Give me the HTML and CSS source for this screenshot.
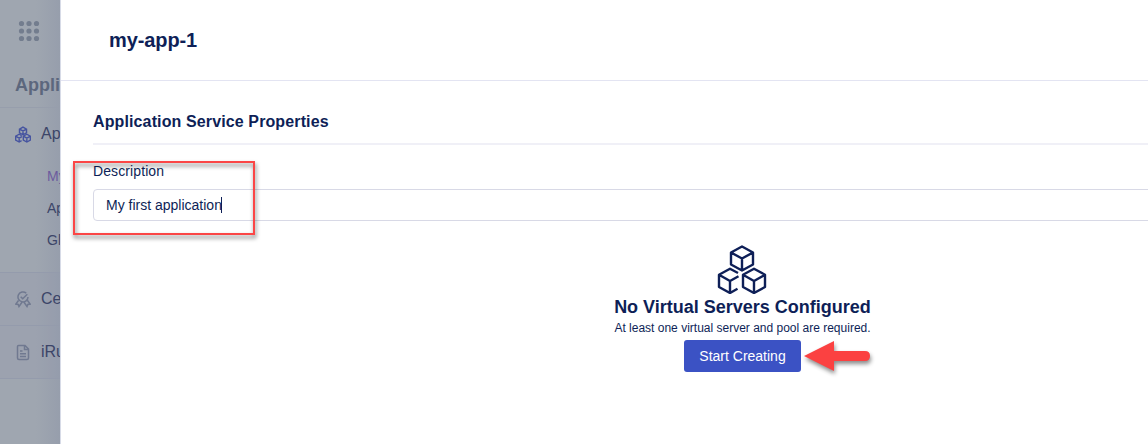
FILE: index.html
```html
<!DOCTYPE html>
<html lang="en">
<head>
<meta charset="utf-8">
<title>my-app-1</title>
<link rel="stylesheet" href="styles.css">
</head>
<body>
<svg class="defs" aria-hidden="true">
  <symbol id="cubes" viewBox="0 0 50 49">
    <path d="M25 1.500 36 7.500V19.500L25 25.500 14 19.500V7.500ZM14 7.500 25 13.500 36 7.500M25 13.500V25.500"/>
    <path d="M21 28 13 23.700 2 29.700V42L13 48 20.500 43.800M2 29.700 13 36 21.500 31.200M13 36V48"/>
    <path d="M37 23.700 48 29.700V42L37 48 26 42V29.700ZM26 29.700 37 36 48 29.700M37 36V48"/>
  </symbol>
</svg>
<div class="app">
  <nav class="sidebar">
    <div class="side-head">
      <svg class="grid-icon" viewBox="0 0 20 20"><circle cx="2.500" cy="2.500" r="2.600"/><circle cx="10" cy="2.500" r="2.600"/><circle cx="17.500" cy="2.500" r="2.600"/><circle cx="2.500" cy="10" r="2.600"/><circle cx="10" cy="10" r="2.600"/><circle cx="17.500" cy="10" r="2.600"/><circle cx="2.500" cy="17.500" r="2.600"/><circle cx="10" cy="17.500" r="2.600"/><circle cx="17.500" cy="17.500" r="2.600"/></svg>
      <h2 class="side-title">Appli</h2>
    </div>
    <section class="group">
      <div class="item"><svg class="item-icon active-icon"><use href="#cubes"/></svg><span>Ap</span></div>
      <ul class="sub">
        <li class="current">My</li>
        <li>Ap</li>
        <li>Gl</li>
      </ul>
    </section>
    <div class="item row"><svg class="item-icon" viewBox="0 0 16 16"><path d="M11.200 1.600A5 5 0 1 0 13 5.500M5.700 5.200 7.700 7.200 12.300 2.800M3.500 9 .8 12.600 3.200 12.900 4 15 6.800 11M12.500 9 15.200 12.600 12.800 12.900 12 15 9.200 11"/></svg><span>Ce</span></div>
    <div class="item row"><svg class="item-icon" viewBox="0 0 16 16"><path d="M3.500 1H10L13.500 4.500V13.500Q13.500 15 12 15H4Q2.500 15 2.500 13.500V2Q2.500 1 3.500 1M9.500 1V5H13.500M5 6.500H7.500M5 9.200H11M5 12H11"/></svg><span>iRu</span></div>
  </nav>
  <main class="panel">
    <header class="panel-head"><h1>my-app-1</h1></header>
    <div class="panel-body">
      <h2 class="section-title">Application Service Properties</h2>
      <label class="label" for="description">Description</label>
      <div class="field" id="description"><span>My first application</span><i class="caret"></i></div>
      <div class="empty">
        <svg class="empty-icon"><use href="#cubes"/></svg>
        <h3>No Virtual Servers Configured</h3>
        <p>At least one virtual server and pool are required.</p>
        <button class="start">Start Creating</button>
      </div>
    </div>
  </main>
  <div class="highlight"></div>
  <svg class="arrow" viewBox="0 0 80 44"><path d="M6 20 36 5V15H67Q72 15 72 20T67 25H36V35Z"/></svg>
</div>
</body>
</html>
```
FILE: styles.css
```css
* { box-sizing: border-box; }
body { margin: 0; overflow: hidden; font-family: "Liberation Sans", Arial, sans-serif; color: #0e1f57; }
h1, h2, h3, p, ul { margin: 0; padding: 0; }
.defs { position: absolute; width: 0; height: 0; }
.app { position: relative; display: flex; width: 1148px; height: 444px; overflow: hidden; background: #fff; }
.sidebar { flex: 0 0 60px; overflow: hidden; white-space: nowrap; color: #3c4568; background: linear-gradient(90deg, transparent 36px, rgba(125, 134, 160, .25)), #9fa6b0; }
.side-head { height: 108px; padding: 21px 0 0 15px; border-bottom: 1px solid #979eac; }
.grid-icon { display: block; width: 20px; height: 20px; margin-left: 4px; fill: #737d8e; overflow: visible; }
.side-title { margin-top: 34px; font-size: 18px; line-height: 20px; color: #5c677d; }
.group { height: 165px; border-bottom: 1px solid #949bac; }
.item { display: flex; align-items: center; gap: 10px; height: 52px; padding-left: 15px; font-size: 16px; }
.item-icon { flex: none; width: 16px; height: 17px; fill: none; stroke: #707990; stroke-width: 1.5; }
.active-icon { stroke: #4654a0; stroke-width: 4.4; }
.sub { list-style: none; font-size: 14px; line-height: 32px; padding-left: 47px; }
.sub .current { color: #6c5b9e; }
.row { height: 53px; border-bottom: 1px solid #949bac; background: rgba(145, 149, 172, .22); }
.panel { flex: none; width: 1365px; border-left: 1px solid #d7dbe7; background: #fff; }
.panel-head { height: 81px; padding: 28px 0 0 48px; border-bottom: 1px solid #e3e4f2; }
.panel-head h1 { font-size: 20px; line-height: 24px; letter-spacing: -.1px; }
.panel-body { padding: 31px 33px 0 32px; }
.section-title { height: 33px; border-bottom: 2px solid #f0f0f7; font-size: 16px; line-height: 20px; letter-spacing: .12px; }
.label { display: block; margin-top: 17px; font-size: 14px; line-height: 18px; letter-spacing: .1px; }
.field { display: flex; align-items: center; height: 32px; margin-top: 9px; padding-left: 12px; border: 1px solid #d8d9e6; border-radius: 4px; font-size: 14px; }
.caret { width: 1px; height: 16px; margin-left: -1px; background: #0e1f57; }
.empty { display: flex; flex-direction: column; align-items: center; padding-top: 24px; }
.empty-icon { width: 50px; height: 49px; margin-right: 2px; fill: none; stroke: #0e1f57; stroke-width: 2.4; stroke-linejoin: round; }
.empty h3 { margin-top: 2px; font-size: 18px; line-height: 22px; }
.empty p { padding-top: 1px; font-size: 12px; line-height: 18px; }
.start { width: 117px; height: 32px; margin-top: 3px; padding: 0; border: 0; border-radius: 3px; background: #3b52c4; color: #fff; font: 14px "Liberation Sans", Arial, sans-serif; }
.highlight { position: absolute; left: 73px; top: 161px; width: 182px; height: 74px; border: 2px solid #fb4646; filter: drop-shadow(1px 3px 2px rgba(0, 0, 0, .55)); }
.arrow { position: absolute; left: 798px; top: 336px; width: 80px; height: 44px; fill: #fb4141; filter: drop-shadow(1px 3px 2px rgba(0, 0, 0, .45)); }
```
